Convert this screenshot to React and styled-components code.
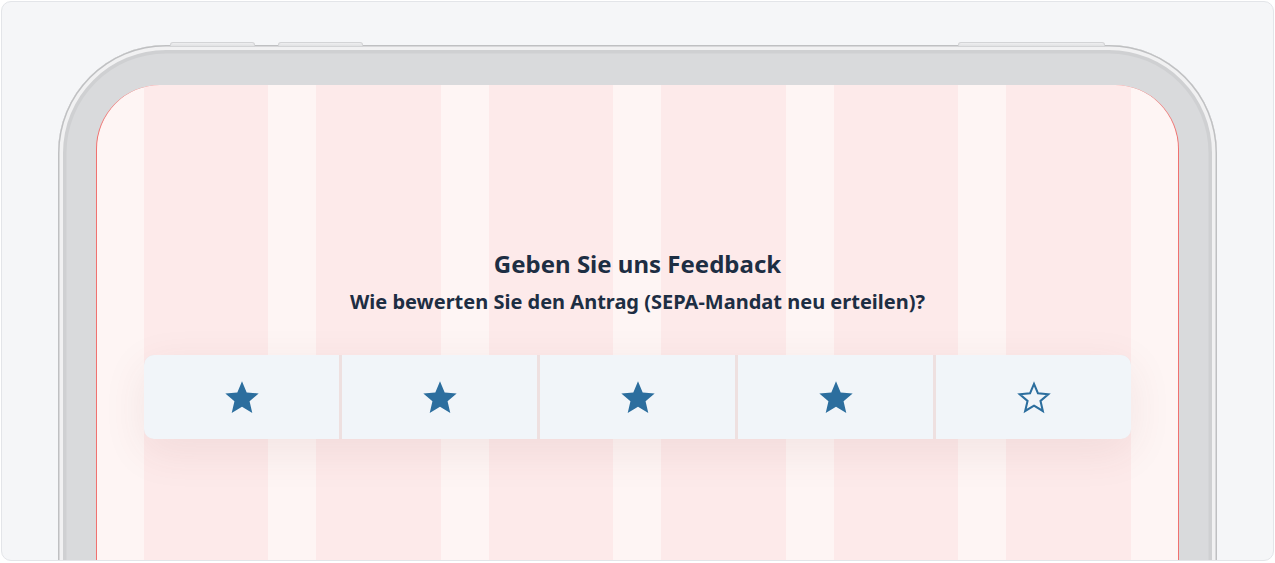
import React from "react";
import styled, { createGlobalStyle } from "styled-components";

const Global = createGlobalStyle`
  html, body { margin: 0; padding: 0; background: #ffffff; }
  body { font-family: "Noto Sans", "Open Sans", sans-serif; }
  * { box-sizing: border-box; }
`;

const Page = styled.div`
  padding: 1px;
  width: 1275px;
  height: 563px;
`;

const Card = styled.div`
  width: 1273px;
  height: 560px;
  border: 1px solid #e3e5e9;
  border-radius: 10px;
  background: #f5f6f8;
  overflow: hidden;
  padding: 43px 0 0 56px;
`;

const Phone = styled.div`
  position: relative;
  width: 1159px;
  height: 640px;
  padding: 40px 38px 0;
  border-radius: 108px 108px 0 0;
  background: #d9dadc;
  box-shadow:
    inset 0 0 0 1.5px #bfc0c2,
    inset 0 0 0 5px #f1f1f2,
    inset 0 0 0 8.5px #cfd0d2;
  display: flex;
`;

const SideButton = styled.span`
  position: absolute;
  top: -3px;
  left: ${(p) => p.$left}px;
  width: ${(p) => p.$width}px;
  height: 5px;
  border-radius: 3px 3px 0 0;
  background: linear-gradient(#f3f3f4, #dcdddf);
  box-shadow: inset 0 0 0 1px #d3d4d6;
`;

const Screen = styled.div`
  flex: 1;
  position: relative;
  border-radius: 64px 64px 0 0;
  border-left: 1px solid #f0716f;
  border-right: 1px solid #f0716f;
  background-color: #fef5f4;
  background-image: repeating-linear-gradient(
    90deg,
    #fdeaea 0px,
    #fdeaea 124.5px,
    transparent 124.5px,
    transparent 172.5px
  );
  background-position: 47px 0;
  background-size: calc(100% - 94px) 100%;
  background-repeat: no-repeat;
  padding: 163px 47px 0;
  display: flex;
  flex-direction: column;
  align-items: center;
`;

const Title = styled.h1`
  margin: 0;
  font-family: "Noto Sans", sans-serif;
  font-size: 24px;
  line-height: 32px;
  font-weight: 700;
  color: #1d2e43;
`;

const Subtitle = styled.p`
  margin: 8px 0 0;
  font-family: "Noto Sans", sans-serif;
  font-size: 20px;
  line-height: 28px;
  font-weight: 700;
  color: #1d2e43;
`;

const Rating = styled.div`
  margin-top: 39px;
  width: 100%;
  height: 84px;
  display: flex;
  gap: 3px;
  border-radius: 10px;
  overflow: hidden;
  background: #eee0e0;
  box-shadow: 0 12px 44px rgba(120, 60, 60, 0.09);
`;

const Segment = styled.button`
  flex: 1;
  border: 0;
  padding: 0;
  margin: 0;
  background: #f1f5f9;
  display: flex;
  align-items: center;
  justify-content: center;
  cursor: pointer;
`;

const StarSvg = styled.svg`
  width: 40px;
  height: 40px;
  display: block;
  margin-top: 2px;
`;

const STAR =
  "M12 17.27L18.18 21l-1.64-7.03L22 9.24l-7.19-.61L12 2 9.19 8.63 2 9.24l5.46 4.73L5.82 21z";

function Star({ filled }) {
  return (
    <StarSvg viewBox="0 0 24 24" aria-hidden="true">
      {filled ? (
        <path d={STAR} fill="#2c6e9e" />
      ) : (
        <path
          d="M12 16.6L17.3 19.8l-1.4-6.02L20.55 9.75l-6.17-.52L12 3.55 9.62 9.23 3.45 9.75l4.68 4.03L6.7 19.8z"
          fill="none"
          stroke="#2c6e9e"
          strokeWidth="1.25"
          strokeLinejoin="miter"
        />
      )}
    </StarSvg>
  );
}

export default function App() {
  const value = 4;
  return (
    <>
      <Global />
      <Page>
        <Card>
          <Phone>
            <SideButton $left={112} $width={85} />
            <SideButton $left={220} $width={85} />
            <SideButton $left={900} $width={147} />
            <Screen>
              <Title>Geben Sie uns Feedback</Title>
              <Subtitle>Wie bewerten Sie den Antrag (SEPA-Mandat neu erteilen)?</Subtitle>
              <Rating role="radiogroup" aria-label="Bewertung">
                {[1, 2, 3, 4, 5].map((n) => (
                  <Segment key={n} aria-label={`${n} Sterne`}>
                    <Star filled={n <= value} />
                  </Segment>
                ))}
              </Rating>
            </Screen>
          </Phone>
        </Card>
      </Page>
    </>
  );
}
